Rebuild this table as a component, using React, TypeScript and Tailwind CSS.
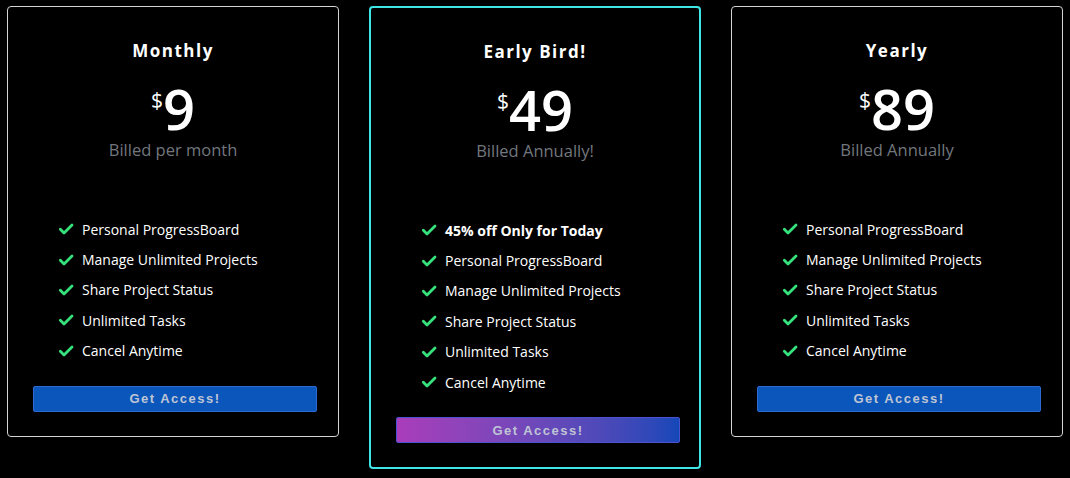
import React from "react";

interface Plan {
  name: string;
  price: string;
  billing: string;
  features: string[];
  highlight?: string;
  featured?: boolean;
}

const plans: Plan[] = [
  {
    name: "Monthly",
    price: "9",
    billing: "Billed per month",
    features: ["Personal ProgressBoard", "Manage Unlimited Projects", "Share Project Status", "Unlimited Tasks", "Cancel Anytime"],
  },
  {
    name: "Early Bird!",
    price: "49",
    billing: "Billed Annually!",
    highlight: "45% off Only for Today",
    featured: true,
    features: ["Personal ProgressBoard", "Manage Unlimited Projects", "Share Project Status", "Unlimited Tasks", "Cancel Anytime"],
  },
  {
    name: "Yearly",
    price: "89",
    billing: "Billed Annually",
    features: ["Personal ProgressBoard", "Manage Unlimited Projects", "Share Project Status", "Unlimited Tasks", "Cancel Anytime"],
  },
];

const CheckIcon: React.FC = () => (
  <svg viewBox="0 0 24 24" className="h-[16px] w-[16px] shrink-0" fill="none" stroke="#36e27c" strokeWidth={4.2} strokeLinecap="round" strokeLinejoin="round">
    <path d="M3.5 12.5l5.5 5.5L21 6" />
  </svg>
);

const PlanCard: React.FC<{ plan: Plan }> = ({ plan }) => {
  const cardBorder = plan.featured ? "border-2 border-[#3ee6e6]" : "border border-[#d4d4d4]";
  const buttonBg = plan.featured
    ? "bg-gradient-to-r from-[#a93cba] to-[#1447b8] border-[#4a52d0]"
    : "bg-[#0a56bb] border-[#2d6bd3]";

  return (
    <div className={`w-[332px] rounded-[4px] bg-black ${cardBorder} pt-[32px] pb-[24px]`}>
      <h2 className="text-center text-[17px] leading-[24px] font-bold tracking-[1.5px] text-white">{plan.name}</h2>

      {/* price with superscript dollar */}
      <div className="mt-[17px] flex justify-center text-white">
        <span className="mt-[8px] text-[21px] leading-[24px]">$</span>
        <span className="text-[56px] leading-[56px] font-semibold">{plan.price}</span>
      </div>
      <p className="mt-[2px] text-center text-[16.5px] leading-[24px] text-[#72777e]">{plan.billing}</p>

      <ul className="mt-[52px] pl-[50px]">
        {plan.highlight && (
          <li className="flex h-[30.4px] items-center gap-[8px] text-[14px] font-bold text-white">
            <CheckIcon />
            <span>{plan.highlight}</span>
          </li>
        )}
        {plan.features.map((feature) => (
          <li key={feature} className="flex h-[30.4px] items-center gap-[8px] text-[14px] text-white">
            <CheckIcon />
            <span>{feature}</span>
          </li>
        ))}
      </ul>

      <button
        type="button"
        className={`mt-[20px] ml-[25px] mr-[22px] block h-[26px] w-[284px] rounded-[2px] border ${buttonBg} text-[13px] font-bold tracking-[1.5px] text-[#bfc5d4] [font-family:'Liberation_Sans',Arial,sans-serif]`}
      >
        Get Access!
      </button>
    </div>
  );
};

const App: React.FC = () => {
  return (
    <div className="min-h-[478px] w-full bg-black [font-family:'Open_Sans',sans-serif]">
      <div className="flex items-start justify-center gap-[30px] pt-[6px]">
        {plans.map((plan) => (
          <PlanCard key={plan.name} plan={plan} />
        ))}
      </div>
    </div>
  );
};

export default App;
